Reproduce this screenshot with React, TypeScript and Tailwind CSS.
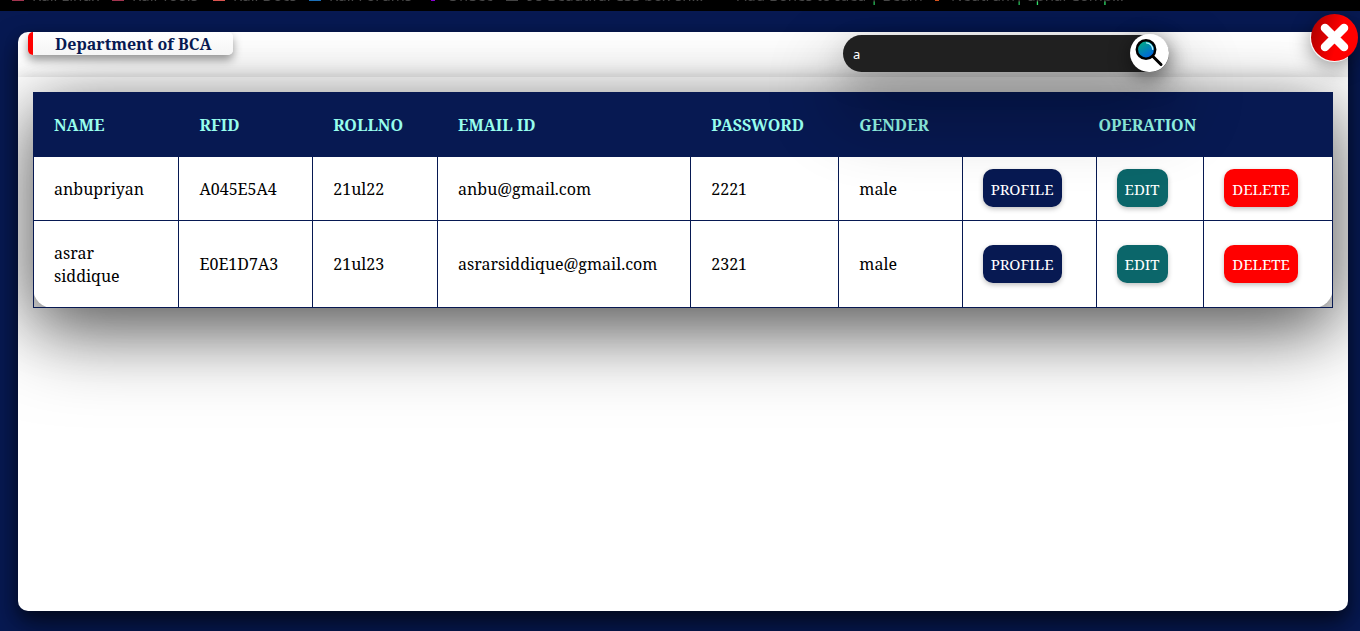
import React from "react";

type Student = { name: string; rfid: string; roll: string; email: string; password: string; gender: string };

const students: Student[] = [
  { name: "anbupriyan", rfid: "A045E5A4", roll: "21ul22", email: "anbu@gmail.com", password: "2221", gender: "male" },
  { name: "asrar siddique", rfid: "E0E1D7A3", roll: "21ul23", email: "asrarsiddique@gmail.com", password: "2321", gender: "male" },
];

const bookmarks = [
  { label: "Kali Linux", icon: "w-3 bg-[#a3344f]", width: "w-[100px]" },
  { label: "Kali Tools", icon: "w-3 bg-[#a3344f]", width: "w-[101px]" },
  { label: "Kali Docs", icon: "w-3 bg-[#d9534f]", width: "w-[96px]" },
  { label: "Kali Forums", icon: "w-3 bg-[#1b6fb8]", width: "w-[118px]" },
  { label: "OffSec", icon: "w-3 px-1 bg-clip-content bg-[#8a00d4]", width: "w-[79px]" },
  { label: "98 Beautiful CSS box-sh…", icon: "w-3 bg-[#444444]", width: "w-[211px]" },
  { label: "Add Bones to Idea | Beam", icon: "w-3 bg-black", width: "w-[214px]" },
  { label: "Neutrum| aphal Comp…", icon: "w-3 px-1 bg-clip-content bg-[#d9541e]", width: "w-[220px]" },
];

const cell = "border border-[#071952] px-5";
const textCell = `${cell} pt-0.5`;
const headCell = "border-x border-[#071952] px-5 pt-0.5 font-bold";
const action = "h-[38px] rounded-[10px] px-2 pt-0.5 text-[15px] text-white shadow-[0_2px_5px_rgba(0,0,0,0.25)]";

function SearchIcon() {
  return (
    <svg viewBox="0 0 30 30" className="size-[30px]" aria-hidden="true">
      <defs>
        <linearGradient id="lens" x1="0" y1="0" x2="0.6" y2="1">
          <stop offset="0" stopColor="#00b873" />
          <stop offset="1" stopColor="#0062e0" />
        </linearGradient>
      </defs>
      <path d="M17 17.500 26 26.500" stroke="#000" strokeWidth="3" strokeLinecap="round" />
      <circle cx="11" cy="11.500" r="9.200" fill="url(#lens)" stroke="#000" strokeWidth="2.500" />
      <path d="M11.500 4.800q5.500 0.700 6.300 6.500" fill="none" stroke="#bdf5ff" strokeWidth="1.300" strokeLinecap="round" />
    </svg>
  );
}

function CloseIcon() {
  return (
    <svg viewBox="0 0 48 48" className="size-12" aria-hidden="true">
      <defs>
        <linearGradient id="close" x1="0" y1="0.3" x2="1" y2="0.6">
          <stop offset="0" stopColor="#b00000" />
          <stop offset="0.6" stopColor="#ff0000" />
        </linearGradient>
      </defs>
      <circle cx="24.500" cy="23.500" r="23.500" fill="url(#close)" />
      <path d="M15 14 34 33M34 14 15 33" stroke="#fff" strokeWidth="8.500" strokeLinecap="round" />
    </svg>
  );
}

export default function App() {
  return (
    <div className="flex min-h-screen flex-col overflow-hidden bg-[#071952] font-['Noto_Serif','Droid_Serif','DejaVu_Serif_Condensed',serif] text-base text-black">
      <nav className="flex h-[11px] items-start overflow-hidden bg-black pl-3 font-['Noto_Sans',sans-serif] text-[15px] leading-4">
        {bookmarks.map((b) => (
          <a key={b.label} href="#" className={`-mt-[13px] flex h-5 shrink-0 items-start gap-2 whitespace-nowrap ${b.width}`}>
            <span className={`h-3.5 shrink-0 ${b.icon}`} />
            <span className="h-5 bg-linear-to-b from-[#484848] from-70% to-[#2ee66b] to-75% bg-clip-text text-transparent">{b.label}</span>
          </a>
        ))}
      </nav>
      <main className="relative mt-[21px] mr-3 mb-5 ml-[18px] flex flex-1 flex-col rounded-[10px] bg-white shadow-[0_14px_28px_rgba(0,0,0,0.5),0_6px_14px_rgba(0,0,0,0.3)]">
        <div className="flex flex-1 flex-col overflow-hidden rounded-[10px]">
          <header className="relative flex h-[45px] items-start pl-2.5">
            <h1 className="relative z-10 h-[23px] w-[205px] rounded-[5px] border-l-[5px] border-[#ff0000] bg-linear-to-b from-white to-[#f5f5f5] pl-[22px] text-base leading-6 font-bold text-[#071952] shadow-[0_5px_10px_rgba(0,0,0,0.4)]">
              Department of BCA
            </h1>
          </header>
          <section className="flex-1 px-[15px] pt-[15px] shadow-[0_0_14px_rgba(0,0,0,0.16)]">
            <div className="rounded-[20px] bg-white shadow-[0_25px_80px_rgba(0,0,0,0.5),0_12px_60px_rgba(0,0,0,0.3)]">
              <table className="w-full table-fixed border-collapse text-left">
                <colgroup>
                  <col className="w-[11.200%]" /><col className="w-[10.300%]" /><col className="w-[9.600%]" />
                  <col className="w-[19.500%]" /><col className="w-[11.400%]" /><col className="w-[9.500%]" />
                  <col className="w-[10.300%]" /><col className="w-[8.300%]" /><col />
                </colgroup>
                <thead className="bg-[#071952] text-[#97feed]">
                  <tr className="h-16">
                    {["NAME", "RFID", "ROLLNO", "EMAIL ID", "PASSWORD", "GENDER"].map((h) => (
                      <th key={h} className={headCell}>{h}</th>
                    ))}
                    <th colSpan={3} className={`${headCell} text-center`}>OPERATION</th>
                  </tr>
                </thead>
                <tbody>
                  {students.map((s) => (
                    <tr key={s.roll} className="h-16 leading-[23px]">
                      <td className={`${cell} pt-[21px] pb-[19px]`}>{s.name}</td>
                      <td className={textCell}>{s.rfid}</td>
                      <td className={textCell}>{s.roll}</td>
                      <td className={textCell}>{s.email}</td>
                      <td className={textCell}>{s.password}</td>
                      <td className={textCell}>{s.gender}</td>
                      <td className={cell}><button className={`${action} bg-[#071952]`}>PROFILE</button></td>
                      <td className={cell}><button className={`${action} bg-[#0b666a]`}>EDIT</button></td>
                      <td className={cell}><button className={`${action} bg-[#ff0000]`}>DELETE</button></td>
                    </tr>
                  ))}
                </tbody>
              </table>
            </div>
          </section>
        </div>
        <form className="absolute top-[3px] right-[179px] flex h-[37px] w-[326px] rounded-full bg-[#202020] shadow-[0_10px_30px_rgba(0,0,0,0.15),0_35px_70px_10px_rgba(0,0,0,0.3)]" onSubmit={(e) => e.preventDefault()}>
          <input aria-label="Search" defaultValue="a" className="min-w-0 flex-1 bg-transparent pt-0.5 pl-2.5 font-['Noto_Sans',sans-serif] text-[13px] text-white outline-none" />
          <button aria-label="Search" className="-mt-px flex h-[38px] w-[39px] items-center justify-center rounded-full bg-white shadow-[0_5px_20px_rgba(0,0,0,0.5)]"><SearchIcon /></button>
        </form>
        <button aria-label="Close" className="absolute -top-[18px] -right-2.5 rounded-full shadow-[0_5px_20px_rgba(0,0,0,0.4)]"><CloseIcon /></button>
      </main>
    </div>
  );
}
